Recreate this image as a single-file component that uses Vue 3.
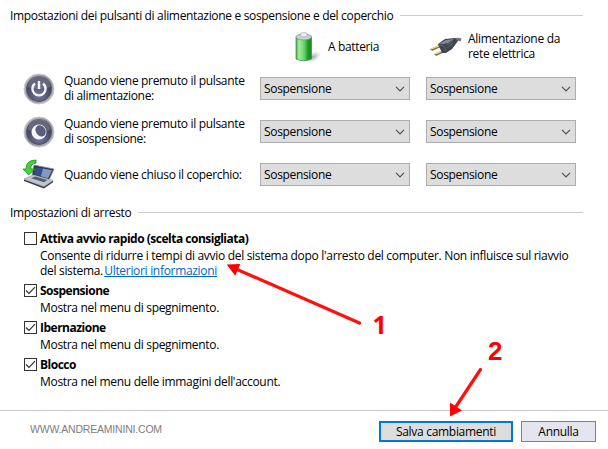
<script setup>
import { ref } from "vue";

const rows = ref([
    {
        icon: "power",
        lines: ["Quando viene premuto il pulsante", "di alimentazione:"],
        battery: "Sospensione",
        plugged: "Sospensione",
    },
    {
        icon: "sleep",
        lines: ["Quando viene premuto il pulsante", "di sospensione:"],
        battery: "Sospensione",
        plugged: "Sospensione",
    },
    {
        icon: "lid",
        lines: ["Quando viene chiuso il coperchio:"],
        battery: "Sospensione",
        plugged: "Sospensione",
    },
]);

const options = ref([
    {
        label: "Attiva avvio rapido (scelta consigliata)",
        lines: [
            "Consente di ridurre i tempi di avvio del sistema dopo l'arresto del computer. Non influisce sul riavvio",
            "del sistema.",
        ],
        link: "Ulteriori informazioni",
        checked: false,
    },
    {
        label: "Sospensione",
        lines: ["Mostra nel menu di spegnimento."],
        checked: true,
    },
    {
        label: "Ibernazione",
        lines: ["Mostra nel menu di spegnimento."],
        checked: true,
    },
    {
        label: "Blocco",
        lines: ["Mostra nel menu delle immagini dell'account."],
        checked: true,
    },
]);
</script>

<template>
    <div class="window">
        <main class="content">
            <div class="section-title">
                <span>Impostazioni dei pulsanti di alimentazione e sospensione e del coperchio</span>
                <span class="rule" />
            </div>

            <div class="columns">
                <div class="column-head">
                    <svg class="battery" width="30" height="32" viewBox="0 0 30 32">
                        <defs>
                            <linearGradient id="cell" x1="0" x2="1">
                                <stop offset="0" stop-color="#4aa852" />
                                <stop offset="0.2" stop-color="#a5eda3" />
                                <stop offset="0.55" stop-color="#62cf63" />
                                <stop offset="0.75" stop-color="#249b29" />
                                <stop offset="1" stop-color="#128a1c" />
                            </linearGradient>
                            <radialGradient id="shade">
                                <stop offset="0" stop-color="#777" stop-opacity="0.65" />
                                <stop offset="1" stop-color="#aaa" stop-opacity="0" />
                            </radialGradient>
                        </defs>
                        <ellipse cx="20" cy="26" rx="9" ry="5" fill="url(#shade)" transform="rotate(-28 20 26)" />
                        <path d="M3 6v22q7.500 3.500 15.500 0V6z" fill="url(#cell)" stroke="#348b3c" stroke-width="0.7" />
                        <ellipse cx="10.750" cy="6" rx="7.750" ry="3" fill="#c9d3cf" stroke="#6fa077" stroke-width="0.8" />
                        <path d="M7 5l1-3q2.750-1.500 5.500 0l1 3q-3.750 2-7.500 0z" fill="#e9ebf1" stroke="#a2a7b0" stroke-width="0.6" />
                    </svg>
                    <span class="head-text">A batteria</span>
                </div>
                <div class="column-head">
                    <svg class="plug" width="33" height="20" viewBox="0 0 33 20">
                        <path d="M23 5q4-4 9-2" fill="none" stroke="#70747d" stroke-width="3" />
                        <path d="M1 12l9-4 2 2-9 4zM5 17l9-4 2 2-9 4z" fill="#8c6c39" />
                        <path d="M2 12l8-3M6 17l8-3" stroke="#f4dda0" stroke-width="1.300" />
                        <path d="M9 7l7-5 10-1 3 3-6 8-6 4-4 0z" fill="#3f4452" />
                        <path d="M10 7l7-4 8-1-6 4-5 1z" fill="#858b98" />
                        <path d="M10 8l5 1 2 5M18 8l6-4M18 11l6-5" fill="none" stroke="#5e6370" />
                    </svg>
                    <span class="head-text two-lines">Alimentazione da<br />rete elettrica</span>
                </div>
            </div>

            <div v-for="row in rows" :key="row.icon" class="setting-row">
                <svg v-if="row.icon !== 'lid'" class="row-icon" width="32" height="32" viewBox="0 0 32 32">
                    <defs>
                        <linearGradient :id="row.icon + '-ring'" x1="0" y1="0" x2="1" y2="1">
                            <stop offset="0" stop-color="#c2c2c5" />
                            <stop offset="0.5" stop-color="#8e8e94" />
                            <stop offset="1" stop-color="#bcbcc0" />
                        </linearGradient>
                        <radialGradient :id="row.icon + '-face'" cx="0.5" cy="0.75">
                            <stop offset="0" stop-color="#777b9e" />
                            <stop offset="1" stop-color="#45475f" />
                        </radialGradient>
                    </defs>
                    <circle cx="16" cy="16" r="15" :fill="`url(#${row.icon}-ring)`" stroke="#c9c9cc" />
                    <circle cx="16" cy="16" r="12.300" :fill="`url(#${row.icon}-face)`" stroke="#555665" stroke-width="1.200" />
                    <path d="M5 14a11 11 0 0 1 22 0q-10 4-22 0z" fill="#9698aa" opacity="0.4" />
                    <g v-if="row.icon === 'power'" fill="none" stroke="#f4f4f8" stroke-width="2.400">
                        <path d="M12 10.500a6.600 6.600 0 1 0 8 0" />
                        <path d="M16 8v8" />
                    </g>
                    <g v-else>
                        <circle cx="16" cy="16" r="7.500" fill="#f3f3f8" />
                        <ellipse cx="17.600" cy="14.800" rx="4.800" ry="6" fill="#5c5f7c" transform="rotate(-35 17.600 14.800)" />
                    </g>
                </svg>
                <svg v-else class="row-icon" width="32" height="32" viewBox="0 0 32 32">
                    <path d="M11 6l20 4-5 11-17-5z" fill="#2f3543" stroke="#8a909c" stroke-width="0.8" />
                    <path d="M12.500 8l16.500 3.200-4 8-14-4z" fill="#34508c" />
                    <path d="M20 9.500l9 1.700-4 8-7-2z" fill="#8399c4" />
                    <path d="M1 20l9-4 20 5.500-9 6z" fill="#c3c6cd" stroke="#9a9ea7" stroke-width="0.7" />
                    <path d="M8 19.200l4-1.700 12.500 3.500-3.500 2.200z" fill="#575c68" />
                    <path d="M1 20.500l20 7.200 9-6v1.600L21 29.500 1 22z" fill="#3a3d46" />
                    <path d="M13 1Q3 1 3 10H0l5.500 6L12 10H8Q7 5 13 4z" fill="#42d23e" stroke="#168d1c" stroke-width="0.8" />
                </svg>
                <div class="row-label">
                    <div v-for="line in row.lines" :key="line">{{ line }}</div>
                </div>
                <div v-for="key in ['battery', 'plugged']" :key="key" class="select">
                    <span>{{ row[key] }}</span>
                    <svg width="10" height="6" viewBox="0 0 10 6">
                        <path d="M1 0.800l4 4 4-4" fill="none" stroke="#505050" stroke-width="1.200" />
                    </svg>
                </div>
            </div>

            <div class="section-title shutdown-title">
                <span>Impostazioni di arresto</span>
                <span class="rule" />
            </div>

            <div v-for="option in options" :key="option.label" class="option">
                <div class="option-head" @click="option.checked = !option.checked">
                    <span class="checkbox">
                        <svg v-if="option.checked" width="11" height="11" viewBox="0 0 11 11">
                            <path d="M1 5.500l3 3 6-6.300" fill="none" stroke="#333" stroke-width="1.200" />
                        </svg>
                    </span>
                    <b>{{ option.label }}</b>
                </div>
                <div class="option-text">
                    <div v-for="(line, i) in option.lines" :key="i">
                        {{ line }}
                        <a v-if="option.link && i === option.lines.length - 1">{{ option.link }}</a>
                    </div>
                </div>
            </div>
        </main>

        <footer class="footer">
            <span class="site">WWW.ANDREAMININI.COM</span>
            <button class="btn primary">Salva cambiamenti</button>
            <button class="btn">Annulla</button>
        </footer>

        <!-- step arrows drawn over the dialog -->
        <svg class="arrows" width="608" height="449" viewBox="0 0 608 449">
            <g stroke="#ff1010" stroke-width="3.200" stroke-linecap="round">
                <path d="M359.500 323L236 269" />
                <path d="M480.500 369.500L455 408" />
            </g>
            <path d="M226.700 264.500l13.600-.5-5.100 11.800zM450 416.500v-14l12 8z" fill="#ff0000" />
            <text class="one" x="372.500" y="334">1</text>
            <text x="488" y="360">2</text>
        </svg>
    </div>
</template>

<style>
body {
    margin: 0;
    background: #fff;
}
</style>

<style scoped>
.window {
    position: relative;
    width: 608px;
    height: 449px;
    overflow: hidden;
    display: flex;
    flex-direction: column;
    background: #fff;
    color: #000;
    font-family: "Open Sans", "Noto Sans", sans-serif;
    font-size: 12px;
    line-height: 15px;
    letter-spacing: -0.33px;
    white-space: nowrap;
}

.content {
    height: 410px;
    box-sizing: border-box;
    padding: 8px 0 0 10px;
}

.section-title {
    display: flex;
    align-items: center;
    gap: 7px;
    width: 573px;
    height: 15px;
    letter-spacing: -0.33px;
}

.rule {
    flex: 1;
    height: 1px;
    background: #ccc;
}

.columns {
    display: flex;
    height: 47px;
    padding-left: 283px;
}

.column-head {
    display: flex;
    align-items: center;
    width: 136px;
}

.head-text {
    letter-spacing: -0.35px;
}

.two-lines {
    margin-top: -1px;
    letter-spacing: -0.3px;
}

.battery {
    margin-right: 5px;
}

.plug {
    margin-right: 6px;
}

.setting-row {
    display: flex;
    align-items: center;
    height: 43px;
    padding-left: 13px;
}

.columns + .setting-row {
    margin-top: -3px;
}

.row-icon {
    flex: none;
    margin-right: 9px;
}

.row-label {
    width: 196px;
    margin-top: -1px;
}

.select {
    display: flex;
    align-items: center;
    justify-content: space-between;
    box-sizing: border-box;
    width: 150px;
    height: 23px;
    margin-right: 16px;
    padding: 0 4px 0 3px;
    border: 1px solid #adadad;
    background: #ddd;
}

.shutdown-title {
    margin-top: 9px;
}

.option {
    padding-left: 14px;
    margin-bottom: 5px;
}

.shutdown-title + .option {
    margin-top: 11px;
}

.option-head {
    display: flex;
    align-items: center;
    gap: 3px;
    height: 15px;
    letter-spacing: -0.5px;
}

.checkbox {
    display: flex;
    box-sizing: border-box;
    width: 13px;
    height: 13px;
    border: 1px solid #333;
}

.option-text {
    padding: 2px 0 0 16px;
    letter-spacing: -0.31px;
}

.option-text a {
    margin-left: -1.5px;
    color: #0066cc;
    text-decoration: underline;
}

.footer {
    display: flex;
    align-items: flex-start;
    box-sizing: border-box;
    height: 39px;
    padding: 10px 12px 0 30px;
    border-top: 1px solid #ccc;
}

.site {
    flex: 1;
    padding-top: 1px;
    color: #808080;
    font-family: "Liberation Sans", sans-serif;
    font-size: 10.500px;
    letter-spacing: -0.2px;
}

.btn {
    box-sizing: border-box;
    width: 75px;
    height: 21px;
    margin-left: 8px;
    padding: 0;
    border: 1px solid #4a90c8;
    background: #e5e5f0;
    color: #000;
    font: inherit;
    letter-spacing: -0.3px;
}

.btn.primary {
    width: 134px;
    border: 2px solid #0078d7;
    background: #ddd;
}

.arrows {
    position: absolute;
    top: 0;
    left: 0;
    pointer-events: none;
}

.arrows text {
    fill: #ff0000;
    font-family: "Liberation Sans", sans-serif;
    font-size: 26px;
    font-weight: bold;
    letter-spacing: 0;
}

.arrows .one {
    font-family: "Open Sans", sans-serif;
    font-size: 25px;
}
</style>
